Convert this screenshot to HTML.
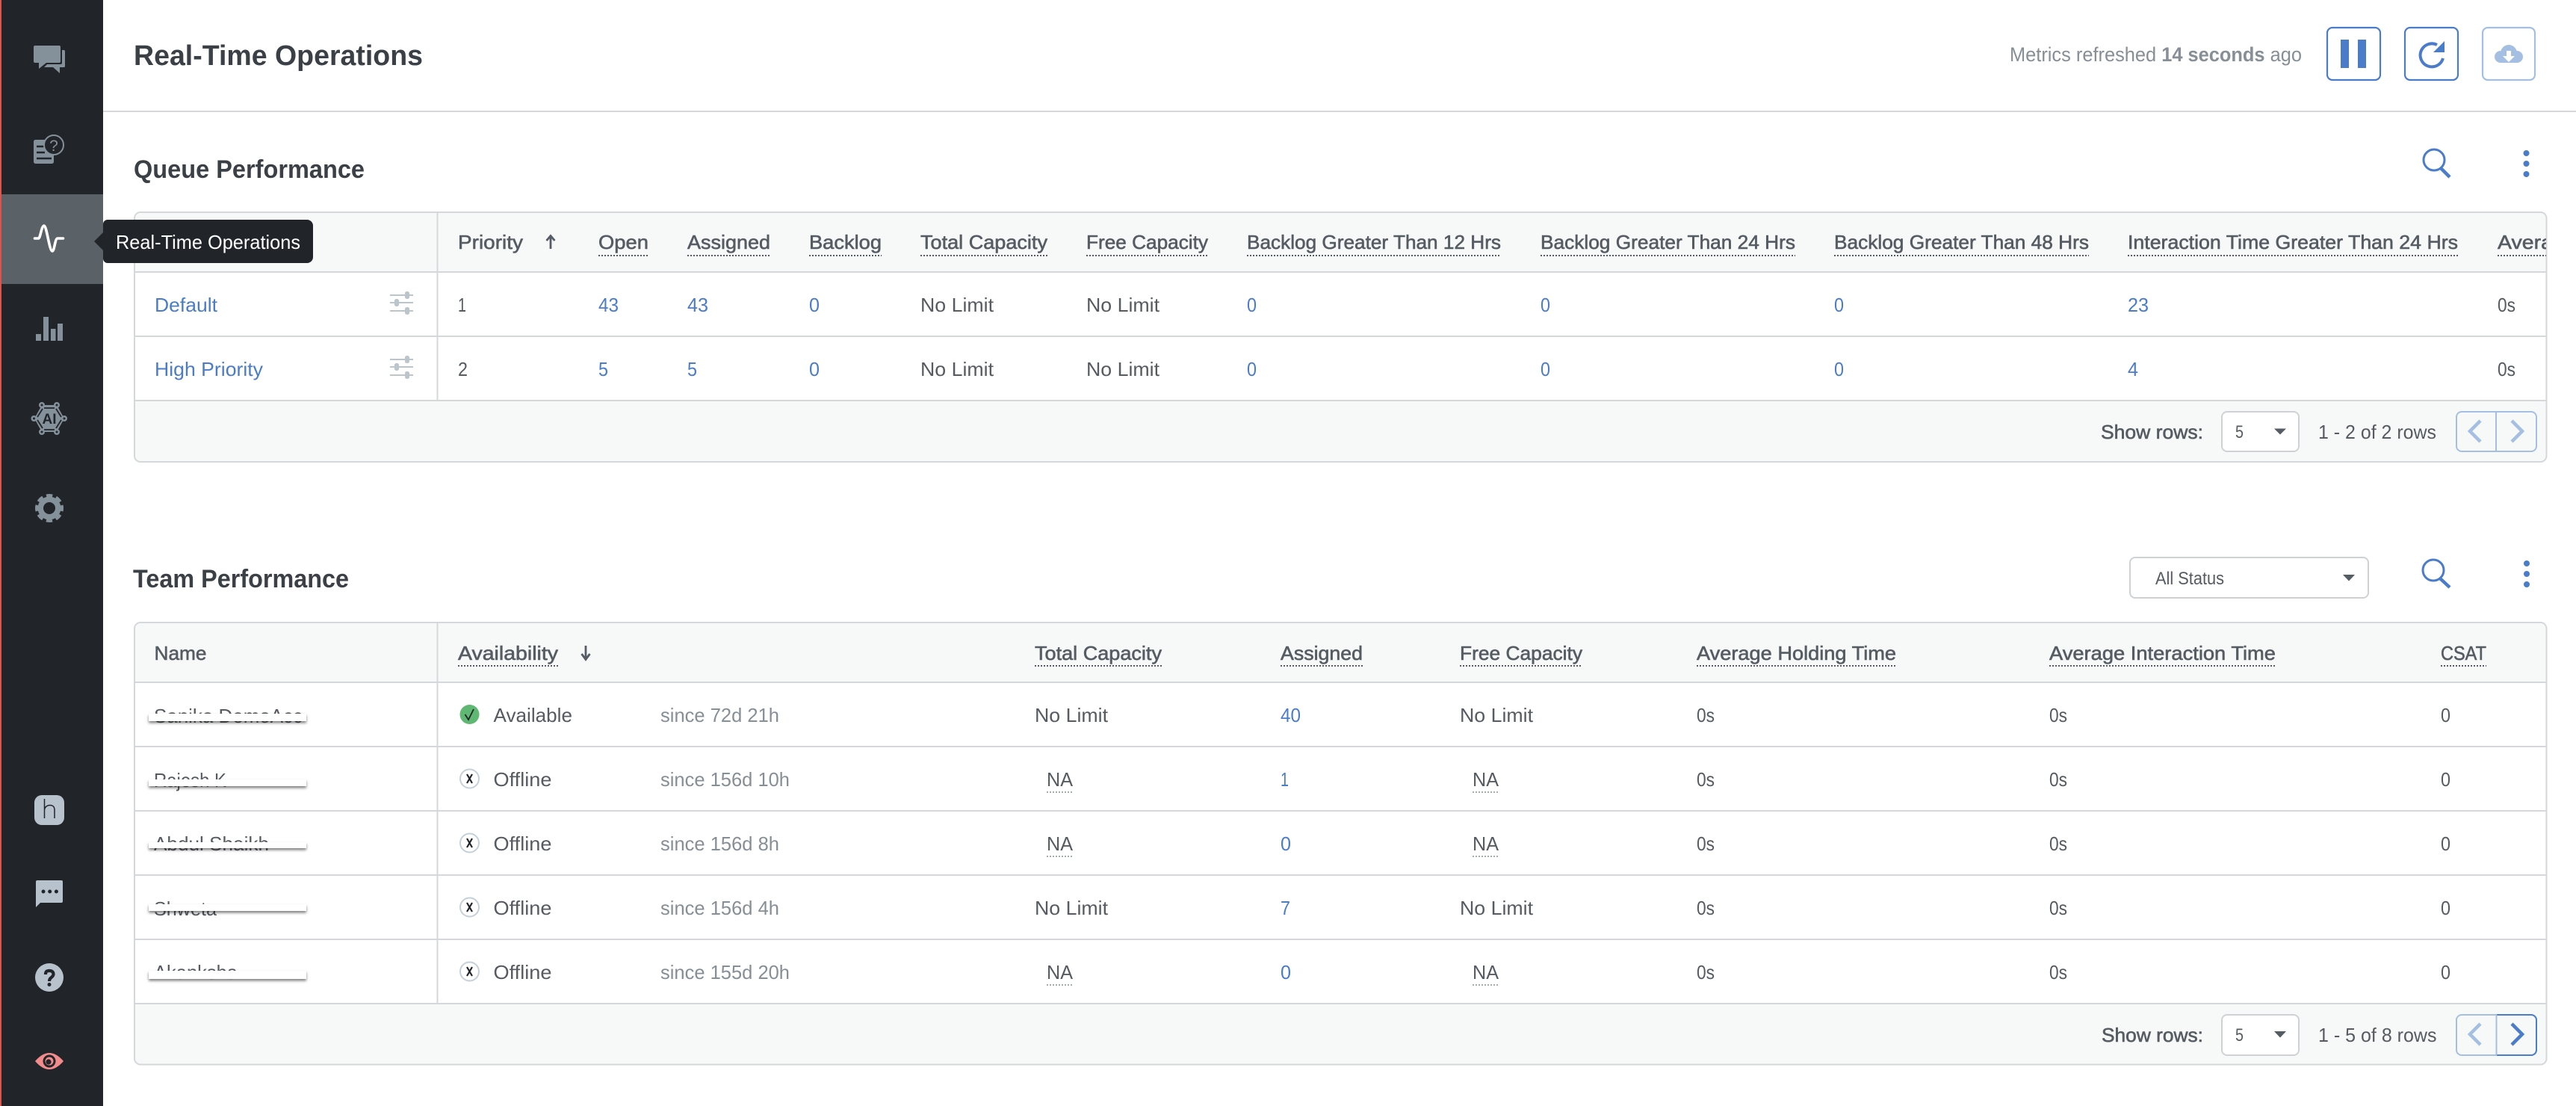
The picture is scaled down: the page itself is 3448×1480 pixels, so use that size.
<!DOCTYPE html>
<html lang="en">
<head>
<meta charset="utf-8">
<title>Real-Time Operations</title>
<style>
html,body{margin:0;padding:0;background:#fff;width:3448px;height:1480px;overflow:hidden}
svg{display:block}
text{font-family:"Liberation Sans",sans-serif;white-space:pre}
.t1{font-size:38px;font-weight:700;fill:#3a4046}
.t2{font-size:34px;font-weight:700;fill:#3a4046}
.h{font-size:26px;fill:#555c63;stroke:#555c63;stroke-width:.6px}
.d{font-size:26px;fill:#555b61}
.l{font-size:26px;fill:#4a7cc9}
.g{font-size:26px;fill:#868e96}
.u{stroke:#555c63;stroke-width:2;stroke-dasharray:2 2;fill:none}
.v{stroke:#868e96;stroke-width:1.5;stroke-dasharray:2 2;fill:none}
.b{stroke:#d5d8da;stroke-width:2;fill:none}
.sl{stroke:#bcc5cc;stroke-width:2;fill:none}
.kn{fill:#bcc5cc}
</style>
</head>
<body>
<svg width="3448" height="1480" viewBox="0 0 3448 1480" xmlns="http://www.w3.org/2000/svg">
<defs>
<clipPath id="qc"><rect x="180" y="285" width="3228" height="330"/></clipPath>
<filter id="bs" x="-5%" y="-80%" width="110%" height="300%"><feDropShadow dx="0" dy="2.500" stdDeviation="1.800" flood-color="#000" flood-opacity=".5"/></filter>
</defs>

<!-- header -->
<text class="t1" x="179" y="87" textLength="387" lengthAdjust="spacingAndGlyphs">Real-Time Operations</text>
<line x1="138" y1="149" x2="3448" y2="149" class="b"/>
<text x="2690" y="82" style="font-size:27px;fill:#868e96" textLength="391" lengthAdjust="spacingAndGlyphs">Metrics refreshed <tspan font-weight="700">14 seconds</tspan> ago</text>

<rect x="3115" y="37" width="71" height="70" rx="7" fill="#fff" stroke="#4a7cc9" stroke-width="2.2"/>
<rect x="3133" y="53" width="11" height="38" fill="#4a7cc9"/>
<rect x="3156" y="53" width="11" height="38" fill="#4a7cc9"/>
<rect x="3219" y="37" width="71" height="70" rx="7" fill="#fff" stroke="#4a7cc9" stroke-width="2.2"/>
<path d="M3270 78A15.500 15.500 0 1 1 3262 60" fill="none" stroke="#4a7cc9" stroke-width="4"/>
<polygon points="3272,55 3272,70 3257,70" fill="#4a7cc9"/>
<rect x="3323" y="37" width="70" height="70" rx="7" fill="#fff" stroke="#a5bfe3" stroke-width="2.2"/>
<g fill="#a5bfe3"><circle cx="3347" cy="76" r="8"/><circle cx="3358" cy="71" r="11"/><circle cx="3369" cy="76" r="8"/><rect x="3347" y="74" width="22" height="10"/></g>
<rect x="3355" y="68" width="6" height="8" fill="#fff"/><polygon points="3350,75 3366,75 3358,83" fill="#fff"/>

<!-- queue section -->
<text class="t2" x="179" y="238" textLength="309" lengthAdjust="spacingAndGlyphs">Queue Performance</text>
<circle cx="3258" cy="214" r="14" fill="none" stroke="#4a7cc9" stroke-width="3"/>
<line x1="3267" y1="225" x2="3279" y2="237" stroke="#4a7cc9" stroke-width="4.500"/>
<circle cx="3381.500" cy="205" r="4" fill="#4a7cc9"/><circle cx="3381.500" cy="219" r="4" fill="#4a7cc9"/><circle cx="3381.500" cy="233" r="4" fill="#4a7cc9"/>

<rect x="180" y="284" width="3228.500" height="334" rx="8" fill="#f7f9f9" stroke="#d5d8da" stroke-width="2"/>
<rect x="181" y="365" width="3226" height="171" fill="#fff"/>
<line x1="180" y1="364" x2="3408" y2="364" class="b"/>
<line x1="180" y1="450" x2="3408" y2="450" class="b"/>
<line x1="180" y1="536" x2="3408" y2="536" class="b"/>
<line x1="585.500" y1="285" x2="585.500" y2="536" class="b"/>

<text class="h" x="207" y="333" textLength="70" lengthAdjust="spacingAndGlyphs">Name</text>
<text class="h" x="613" y="333" textLength="87" lengthAdjust="spacingAndGlyphs">Priority</text>
<path d="M737 333V317M731.500 322L737 315.500L742.500 322" fill="none" stroke="#555c63" stroke-width="2.800"/>
<g clip-path="url(#qc)">
<text class="h" x="801" y="333" textLength="67" lengthAdjust="spacingAndGlyphs">Open</text><line class="u" x1="801" y1="342" x2="868" y2="342"/>
<text class="h" x="920" y="333" textLength="111" lengthAdjust="spacingAndGlyphs">Assigned</text><line class="u" x1="920" y1="342" x2="1031" y2="342"/>
<text class="h" x="1083" y="333" textLength="97" lengthAdjust="spacingAndGlyphs">Backlog</text><line class="u" x1="1083" y1="342" x2="1180" y2="342"/>
<text class="h" x="1232" y="333" textLength="170" lengthAdjust="spacingAndGlyphs">Total Capacity</text><line class="u" x1="1232" y1="342" x2="1402" y2="342"/>
<text class="h" x="1454" y="333" textLength="163" lengthAdjust="spacingAndGlyphs">Free Capacity</text><line class="u" x1="1454" y1="342" x2="1617" y2="342"/>
<text class="h" x="1669" y="333" textLength="340" lengthAdjust="spacingAndGlyphs">Backlog Greater Than 12 Hrs</text><line class="u" x1="1669" y1="342" x2="2009" y2="342"/>
<text class="h" x="2062" y="333" textLength="341" lengthAdjust="spacingAndGlyphs">Backlog Greater Than 24 Hrs</text><line class="u" x1="2062" y1="342" x2="2403" y2="342"/>
<text class="h" x="2455" y="333" textLength="341" lengthAdjust="spacingAndGlyphs">Backlog Greater Than 48 Hrs</text><line class="u" x1="2455" y1="342" x2="2796" y2="342"/>
<text class="h" x="2848" y="333" textLength="442" lengthAdjust="spacingAndGlyphs">Interaction Time Greater Than 24 Hrs</text><line class="u" x1="2848" y1="342" x2="3290" y2="342"/>
<text class="h" x="3343" y="333" textLength="280" lengthAdjust="spacingAndGlyphs">Average Holding Time</text><line class="u" x1="3343" y1="342" x2="3408" y2="342"/>
</g>

<text class="l" x="207" y="417" textLength="84" lengthAdjust="spacingAndGlyphs">Default</text>
<text class="l" x="207" y="503" textLength="145" lengthAdjust="spacingAndGlyphs">High Priority</text>
<g><path class="sl" d="M522 395H553M522 405H553M522 416H553"/><rect class="kn" x="542" y="390" width="6" height="10" rx="2.500"/><rect class="kn" x="528" y="400" width="6" height="10" rx="2.500"/><rect class="kn" x="542" y="411" width="6" height="10" rx="2.500"/></g>
<g transform="translate(0,86)"><path class="sl" d="M522 395H553M522 405H553M522 416H553"/><rect class="kn" x="542" y="390" width="6" height="10" rx="2.500"/><rect class="kn" x="528" y="400" width="6" height="10" rx="2.500"/><rect class="kn" x="542" y="411" width="6" height="10" rx="2.500"/></g>

<text class="d" x="613" y="417" textLength="11" lengthAdjust="spacingAndGlyphs">1</text>
<text class="l" x="801" y="417" textLength="27" lengthAdjust="spacingAndGlyphs">43</text>
<text class="l" x="920" y="417" textLength="28" lengthAdjust="spacingAndGlyphs">43</text>
<text class="l" x="1083" y="417" textLength="14" lengthAdjust="spacingAndGlyphs">0</text>
<text class="d" x="1232" y="417" textLength="98" lengthAdjust="spacingAndGlyphs">No Limit</text>
<text class="d" x="1454" y="417" textLength="98" lengthAdjust="spacingAndGlyphs">No Limit</text>
<text class="l" x="1669" y="417" textLength="13" lengthAdjust="spacingAndGlyphs">0</text>
<text class="l" x="2062" y="417" textLength="13" lengthAdjust="spacingAndGlyphs">0</text>
<text class="l" x="2455" y="417" textLength="13" lengthAdjust="spacingAndGlyphs">0</text>
<text class="l" x="2848" y="417" textLength="28" lengthAdjust="spacingAndGlyphs">23</text>
<text class="d" x="3343" y="417" textLength="24" lengthAdjust="spacingAndGlyphs">0s</text>

<text class="d" x="613" y="503" textLength="13" lengthAdjust="spacingAndGlyphs">2</text>
<text class="l" x="801" y="503" textLength="13" lengthAdjust="spacingAndGlyphs">5</text>
<text class="l" x="920" y="503" textLength="13" lengthAdjust="spacingAndGlyphs">5</text>
<text class="l" x="1083" y="503" textLength="14" lengthAdjust="spacingAndGlyphs">0</text>
<text class="d" x="1232" y="503" textLength="98" lengthAdjust="spacingAndGlyphs">No Limit</text>
<text class="d" x="1454" y="503" textLength="98" lengthAdjust="spacingAndGlyphs">No Limit</text>
<text class="l" x="1669" y="503" textLength="13" lengthAdjust="spacingAndGlyphs">0</text>
<text class="l" x="2062" y="503" textLength="13" lengthAdjust="spacingAndGlyphs">0</text>
<text class="l" x="2455" y="503" textLength="13" lengthAdjust="spacingAndGlyphs">0</text>
<text class="l" x="2848" y="503" textLength="14" lengthAdjust="spacingAndGlyphs">4</text>
<text class="d" x="3343" y="503" textLength="24" lengthAdjust="spacingAndGlyphs">0s</text>

<!-- queue footer -->
<text class="h" x="2812" y="587" textLength="137" lengthAdjust="spacingAndGlyphs">Show rows:</text>
<rect x="2974" y="551" width="103" height="53" rx="7" fill="#fff" stroke="#cfd2d4" stroke-width="2"/>
<text class="d" x="2992" y="586" style="font-size:24px" textLength="11" lengthAdjust="spacingAndGlyphs">5</text>
<polygon points="3044,573.500 3060,573.500 3052,581.500" fill="#555c63"/>
<text class="d" x="3103" y="587" textLength="158" lengthAdjust="spacingAndGlyphs">1 - 2 of 2 rows</text>
<rect x="3288" y="551" width="107" height="53" rx="7" fill="#f7f9f9" stroke="#a5bfe3" stroke-width="2"/>
<line x1="3341" y1="551" x2="3341" y2="604" stroke="#a5bfe3" stroke-width="2"/>
<path d="M3320 563L3306 577L3320 591" fill="none" stroke="#a5bfe3" stroke-width="4.500"/>
<path d="M3362 563L3376 577L3362 591" fill="none" stroke="#a5bfe3" stroke-width="4.500"/>

<!-- team section -->
<text class="t2" x="178" y="786" textLength="289" lengthAdjust="spacingAndGlyphs">Team Performance</text>
<rect x="2851" y="746" width="319" height="54" rx="7" fill="#fff" stroke="#cfd2d4" stroke-width="2"/>
<text class="d" x="2885" y="782" style="font-size:24px" textLength="92" lengthAdjust="spacingAndGlyphs">All Status</text>
<polygon points="3136,769 3152,769 3144,777.500" fill="#555c63"/>
<circle cx="3257" cy="763" r="14" fill="none" stroke="#4a7cc9" stroke-width="3"/>
<line x1="3266" y1="774" x2="3279" y2="786" stroke="#4a7cc9" stroke-width="4.500"/>
<circle cx="3382" cy="754" r="4" fill="#4a7cc9"/><circle cx="3382" cy="768" r="4" fill="#4a7cc9"/><circle cx="3382" cy="782" r="4" fill="#4a7cc9"/>

<rect x="180" y="833" width="3228.500" height="591.500" rx="8" fill="#f7f9f9" stroke="#d5d8da" stroke-width="2"/>
<rect x="181" y="914" width="3226" height="429" fill="#fff"/>
<line x1="180" y1="913" x2="3408" y2="913" class="b"/>
<line x1="180" y1="999" x2="3408" y2="999" class="b"/>
<line x1="180" y1="1085" x2="3408" y2="1085" class="b"/>
<line x1="180" y1="1171" x2="3408" y2="1171" class="b"/>
<line x1="180" y1="1257" x2="3408" y2="1257" class="b"/>
<line x1="180" y1="1343" x2="3408" y2="1343" class="b"/>
<line x1="585.500" y1="834" x2="585.500" y2="1343" class="b"/>

<text class="h" x="206.500" y="883" textLength="70" lengthAdjust="spacingAndGlyphs">Name</text>
<text class="h" x="613" y="883" textLength="134" lengthAdjust="spacingAndGlyphs">Availability</text><line class="u" x1="613" y1="891" x2="747" y2="891"/>
<path d="M784 864V881M778.500 875L784 882.500L789.500 875" fill="none" stroke="#555c63" stroke-width="2.800"/>
<text class="h" x="1385" y="883" textLength="170" lengthAdjust="spacingAndGlyphs">Total Capacity</text><line class="u" x1="1385" y1="891" x2="1555" y2="891"/>
<text class="h" x="1714" y="883" textLength="110" lengthAdjust="spacingAndGlyphs">Assigned</text><line class="u" x1="1714" y1="891" x2="1824" y2="891"/>
<text class="h" x="1954" y="883" textLength="164" lengthAdjust="spacingAndGlyphs">Free Capacity</text><line class="u" x1="1954" y1="891" x2="2118" y2="891"/>
<text class="h" x="2271" y="883" textLength="267" lengthAdjust="spacingAndGlyphs">Average Holding Time</text><line class="u" x1="2271" y1="891" x2="2538" y2="891"/>
<text class="h" x="2743" y="883" textLength="303" lengthAdjust="spacingAndGlyphs">Average Interaction Time</text><line class="u" x1="2743" y1="891" x2="3046" y2="891"/>
<text class="h" x="3267" y="883" textLength="61" lengthAdjust="spacingAndGlyphs">CSAT</text><line class="u" x1="3267" y1="891" x2="3328" y2="891"/>

<!-- names with redaction bars -->
<text class="d" x="206" y="967" textLength="199" lengthAdjust="spacingAndGlyphs">Sanika DemoAcc</text>
<rect x="199" y="955" width="211" height="10" fill="#fff" filter="url(#bs)"/>
<text class="d" x="206" y="1053" textLength="97" lengthAdjust="spacingAndGlyphs">Rajesh K</text>
<rect x="199" y="1043" width="211" height="9" fill="#fff" filter="url(#bs)"/>
<text class="d" x="206" y="1138" textLength="154" lengthAdjust="spacingAndGlyphs">Abdul Shaikh</text>
<rect x="199" y="1127" width="211" height="8" fill="#fff" filter="url(#bs)"/>
<text class="d" x="206" y="1225" textLength="84" lengthAdjust="spacingAndGlyphs">Shweta</text>
<rect x="199" y="1210" width="211" height="9" fill="#fff" filter="url(#bs)"/>
<text class="d" x="206" y="1310" textLength="112" lengthAdjust="spacingAndGlyphs">Akanksha</text>
<rect x="199" y="1299" width="211" height="11" fill="#fff" filter="url(#bs)"/>

<!-- status -->
<circle cx="628.500" cy="956" r="13" fill="#5fb872"/>
<path d="M622.500 956L627 963L634 949" fill="none" stroke="#212529" stroke-width="1.800"/>
<text class="d" x="660.500" y="966" textLength="105.500" lengthAdjust="spacingAndGlyphs">Available</text>
<text class="g" x="884" y="966" textLength="159" lengthAdjust="spacingAndGlyphs">since 72d 21h</text>

<g><circle cx="628.500" cy="1042" r="12.500" fill="#fff" stroke="#c5d0da" stroke-width="2"/><path d="M625 1036L632 1048M632 1036L625 1048" stroke="#212529" stroke-width="2.200"/></g>
<text class="d" x="660.500" y="1052" textLength="78" lengthAdjust="spacingAndGlyphs">Offline</text>
<text class="g" x="884" y="1052" textLength="173" lengthAdjust="spacingAndGlyphs">since 156d 10h</text>

<g><circle cx="628.500" cy="1128" r="12.500" fill="#fff" stroke="#c5d0da" stroke-width="2"/><path d="M625 1122L632 1134M632 1122L625 1134" stroke="#212529" stroke-width="2.200"/></g>
<text class="d" x="660.500" y="1138" textLength="78" lengthAdjust="spacingAndGlyphs">Offline</text>
<text class="g" x="884" y="1138" textLength="159" lengthAdjust="spacingAndGlyphs">since 156d 8h</text>

<g><circle cx="628.500" cy="1214" r="12.500" fill="#fff" stroke="#c5d0da" stroke-width="2"/><path d="M625 1208L632 1220M632 1208L625 1220" stroke="#212529" stroke-width="2.200"/></g>
<text class="d" x="660.500" y="1224" textLength="78" lengthAdjust="spacingAndGlyphs">Offline</text>
<text class="g" x="884" y="1224" textLength="159" lengthAdjust="spacingAndGlyphs">since 156d 4h</text>

<g><circle cx="628.500" cy="1300" r="12.500" fill="#fff" stroke="#c5d0da" stroke-width="2"/><path d="M625 1294L632 1306M632 1294L625 1306" stroke="#212529" stroke-width="2.200"/></g>
<text class="d" x="660.500" y="1310" textLength="78" lengthAdjust="spacingAndGlyphs">Offline</text>
<text class="g" x="884" y="1310" textLength="173" lengthAdjust="spacingAndGlyphs">since 155d 20h</text>

<!-- team data -->
<text class="d" x="1385" y="966" textLength="98" lengthAdjust="spacingAndGlyphs">No Limit</text>
<text class="l" x="1714" y="966" textLength="27" lengthAdjust="spacingAndGlyphs">40</text>
<text class="d" x="1954" y="966" textLength="98" lengthAdjust="spacingAndGlyphs">No Limit</text>
<text class="d" x="2271" y="966" textLength="24" lengthAdjust="spacingAndGlyphs">0s</text>
<text class="d" x="2743" y="966" textLength="24" lengthAdjust="spacingAndGlyphs">0s</text>
<text class="d" x="3267" y="966" textLength="13" lengthAdjust="spacingAndGlyphs">0</text>

<text class="d" x="1401" y="1052" textLength="35" lengthAdjust="spacingAndGlyphs">NA</text><line class="v" x1="1401" y1="1060" x2="1436" y2="1060"/>
<text class="l" x="1714" y="1052" textLength="11" lengthAdjust="spacingAndGlyphs">1</text>
<text class="d" x="1971" y="1052" textLength="35" lengthAdjust="spacingAndGlyphs">NA</text><line class="v" x1="1971" y1="1060" x2="2006" y2="1060"/>
<text class="d" x="2271" y="1052" textLength="24" lengthAdjust="spacingAndGlyphs">0s</text>
<text class="d" x="2743" y="1052" textLength="24" lengthAdjust="spacingAndGlyphs">0s</text>
<text class="d" x="3267" y="1052" textLength="13" lengthAdjust="spacingAndGlyphs">0</text>

<text class="d" x="1401" y="1138" textLength="35" lengthAdjust="spacingAndGlyphs">NA</text><line class="v" x1="1401" y1="1146" x2="1436" y2="1146"/>
<text class="l" x="1714" y="1138" textLength="14" lengthAdjust="spacingAndGlyphs">0</text>
<text class="d" x="1971" y="1138" textLength="35" lengthAdjust="spacingAndGlyphs">NA</text><line class="v" x1="1971" y1="1146" x2="2006" y2="1146"/>
<text class="d" x="2271" y="1138" textLength="24" lengthAdjust="spacingAndGlyphs">0s</text>
<text class="d" x="2743" y="1138" textLength="24" lengthAdjust="spacingAndGlyphs">0s</text>
<text class="d" x="3267" y="1138" textLength="13" lengthAdjust="spacingAndGlyphs">0</text>

<text class="d" x="1385" y="1224" textLength="98" lengthAdjust="spacingAndGlyphs">No Limit</text>
<text class="l" x="1714" y="1224" textLength="13" lengthAdjust="spacingAndGlyphs">7</text>
<text class="d" x="1954" y="1224" textLength="98" lengthAdjust="spacingAndGlyphs">No Limit</text>
<text class="d" x="2271" y="1224" textLength="24" lengthAdjust="spacingAndGlyphs">0s</text>
<text class="d" x="2743" y="1224" textLength="24" lengthAdjust="spacingAndGlyphs">0s</text>
<text class="d" x="3267" y="1224" textLength="13" lengthAdjust="spacingAndGlyphs">0</text>

<text class="d" x="1401" y="1310" textLength="35" lengthAdjust="spacingAndGlyphs">NA</text><line class="v" x1="1401" y1="1318" x2="1436" y2="1318"/>
<text class="l" x="1714" y="1310" textLength="14" lengthAdjust="spacingAndGlyphs">0</text>
<text class="d" x="1971" y="1310" textLength="35" lengthAdjust="spacingAndGlyphs">NA</text><line class="v" x1="1971" y1="1318" x2="2006" y2="1318"/>
<text class="d" x="2271" y="1310" textLength="24" lengthAdjust="spacingAndGlyphs">0s</text>
<text class="d" x="2743" y="1310" textLength="24" lengthAdjust="spacingAndGlyphs">0s</text>
<text class="d" x="3267" y="1310" textLength="13" lengthAdjust="spacingAndGlyphs">0</text>

<!-- team footer -->
<text class="h" x="2813" y="1394" textLength="136" lengthAdjust="spacingAndGlyphs">Show rows:</text>
<rect x="2974" y="1358" width="103" height="54" rx="7" fill="#fff" stroke="#cfd2d4" stroke-width="2"/>
<text class="d" x="2992" y="1393" style="font-size:24px" textLength="11" lengthAdjust="spacingAndGlyphs">5</text>
<polygon points="3044,1380 3060,1380 3052,1388.500" fill="#555c63"/>
<text class="d" x="3103" y="1394" textLength="158.500" lengthAdjust="spacingAndGlyphs">1 - 5 of 8 rows</text>
<rect x="3288" y="1358" width="107" height="54" rx="7" fill="#f7f9f9" stroke="#a5bfe3" stroke-width="2"/>
<path d="M3342 1358H3388a7 7 0 0 1 7 7V1405a7 7 0 0 1-7 7H3342" fill="none" stroke="#4a7cc9" stroke-width="2"/>
<line x1="3341.500" y1="1358" x2="3341.500" y2="1412" stroke="#a5bfe3" stroke-width="2"/>
<path d="M3320 1370L3306 1384L3320 1398" fill="none" stroke="#a5bfe3" stroke-width="4.500"/>
<path d="M3362 1370L3376 1384L3362 1398" fill="none" stroke="#4a7cc9" stroke-width="4.500"/>

<!-- sidebar -->
<rect x="0" y="0" width="138" height="1480" fill="#212529"/>
<rect x="0" y="0" width="2" height="1480" fill="#d9534f"/>
<rect x="2" y="260" width="136" height="120" fill="#5a6268"/>

<g fill="#84909a">
<path d="M47 61H79a2 2 0 0 1 2 2V82a2 2 0 0 1-2 2H62L52 92V84H47a2 2 0 0 1-2-2V63a2 2 0 0 1 2-2Z"/>
<path d="M83 67H85.500a1.500 1.500 0 0 1 1.500 1.500V88.500a1.500 1.500 0 0 1-1.500 1.500H80V98L71 90H59L63 86H81a2 2 0 0 0 2-2Z"/>
</g>

<rect x="45" y="187" width="27" height="32" rx="2.500" fill="#84909a"/>
<path d="M49 196H60M49 204H60M49 212H69" stroke="#212529" stroke-width="2.500"/>
<circle cx="72" cy="194" r="13" fill="#212529" stroke="#84909a" stroke-width="2"/>
<text x="72" y="202" text-anchor="middle" style="font-size:21px;fill:#84909a">?</text>

<path d="M46.500 319H51.500C54 319 55.500 302 59 302C62.500 302 66 336 70 336C73 336 73.500 319 77 319H84.500" fill="none" stroke="#fff" stroke-width="3.600" stroke-linecap="round" stroke-linejoin="round"/>

<g fill="#84909a"><rect x="48" y="447" width="7" height="9"/><rect x="58" y="424" width="7" height="32"/><rect x="68" y="440" width="6.500" height="16"/><rect x="77" y="433" width="7" height="23"/></g>

<g>
<polygon points="56,542 76,542 86,560 76,578 56,578 46,560" fill="#84909a"/>
<path d="M59 546L73 546M82 558L75 547M82 562L75 573M73 575L59 575M50 562L57 573M50 558L57 547" stroke="#212529" stroke-width="1.800"/>
<g fill="#84909a" stroke="#84909a"><circle cx="56" cy="542" r="3.500"/><circle cx="76" cy="542" r="3.500"/><circle cx="86" cy="560" r="3.500"/><circle cx="76" cy="578" r="3.500"/><circle cx="56" cy="578" r="3.500"/><circle cx="45.500" cy="560" r="3.500"/></g>
<g fill="#212529"><circle cx="56" cy="542" r="1.500"/><circle cx="76" cy="542" r="1.500"/><circle cx="86" cy="560" r="1.500"/><circle cx="76" cy="578" r="1.500"/><circle cx="56" cy="578" r="1.500"/><circle cx="45.500" cy="560" r="1.500"/></g>
<text x="66" y="567" text-anchor="middle" style="font-size:19px;font-weight:700;fill:#212529">AI</text>
</g>

<circle cx="66" cy="680" r="15.500" fill="#84909a"/>
<circle cx="66" cy="680" r="16.500" fill="none" stroke="#84909a" stroke-width="5" stroke-dasharray="8 4.960" stroke-dashoffset="4"/>
<circle cx="66" cy="680" r="8" fill="#212529"/>

<rect x="46" y="1064" width="40" height="40" rx="10" fill="#b8c2cc"/>
<path d="M59.500 1069V1095M59.500 1084C60 1079 64 1077.500 67 1077.500C71 1077.500 73 1080 73 1084V1095" fill="none" stroke="#212529" stroke-width="1.500"/>

<path d="M50 1178H82a2 2 0 0 1 2 2V1206a2 2 0 0 1-2 2H54L48 1214V1180a2 2 0 0 1 2-2Z" fill="#b8c2cc"/>
<circle cx="58" cy="1193" r="2.500" fill="#212529"/><circle cx="66.700" cy="1193" r="2.500" fill="#212529"/><circle cx="75.400" cy="1193" r="2.500" fill="#212529"/>

<circle cx="66" cy="1308" r="19" fill="#b8c2cc"/>
<path d="M61 1304C61 1299.500 63 1299 66 1299C69.500 1299 71.500 1300.500 71.500 1303.500C71.500 1308 66 1307.500 66 1313" fill="none" stroke="#212529" stroke-width="4.200"/>
<circle cx="66" cy="1317.500" r="2.500" fill="#212529"/>

<path d="M47 1420Q66 1398 85 1420Q66 1442 47 1420Z" fill="#f28b8b"/>
<circle cx="66" cy="1420" r="8.500" fill="#212529"/>
<circle cx="66" cy="1420" r="5.500" fill="#f28b8b"/>
<circle cx="65" cy="1421" r="3.600" fill="#212529"/>

<!-- tooltip -->
<path d="M126 323L138 311V300a6 6 0 0 1 6-6H411a8 8 0 0 1 8 8V344a8 8 0 0 1-8 8H144a6 6 0 0 1-6-6V335Z" fill="#212529"/>
<text x="155" y="333" style="font-size:26px;fill:#fff" textLength="247" lengthAdjust="spacingAndGlyphs">Real-Time Operations</text>
</svg>
</body>
</html>
